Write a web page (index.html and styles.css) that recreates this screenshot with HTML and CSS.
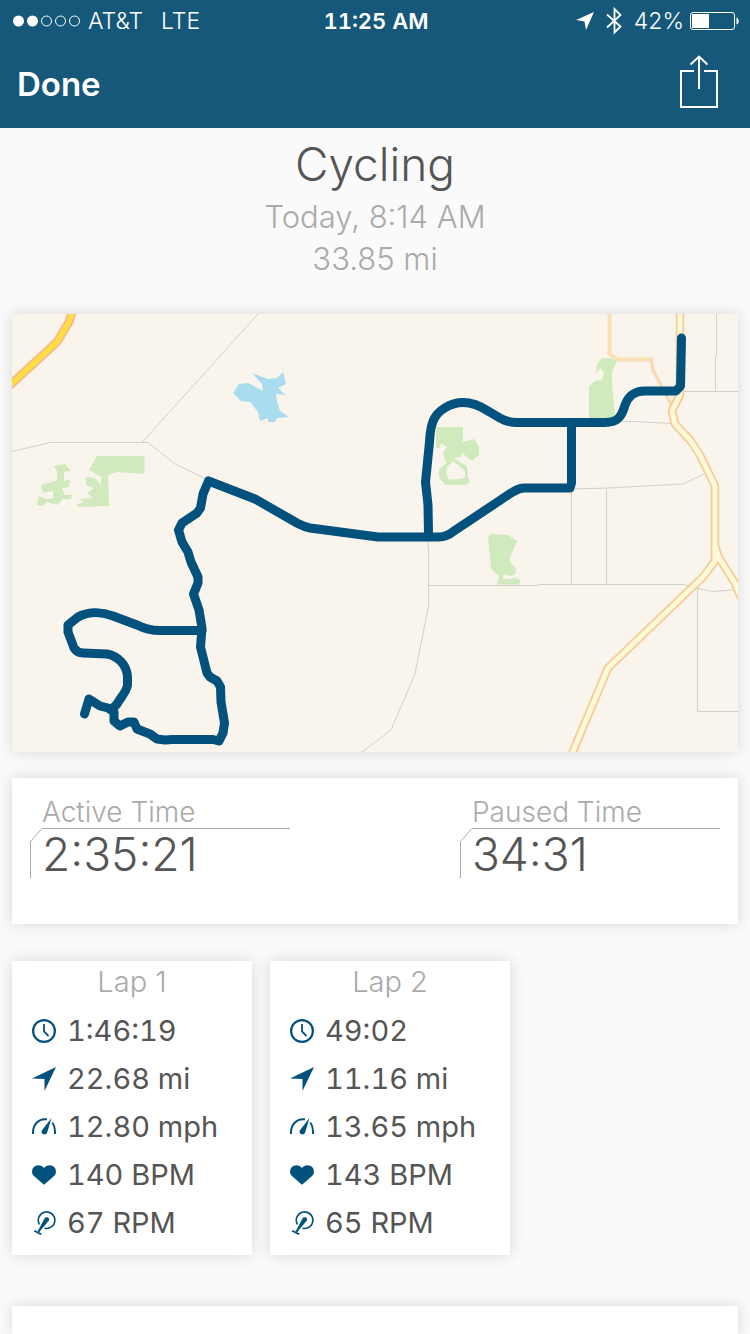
FILE: index.html
```html
<!DOCTYPE html>
<html lang="en">
  <head>
    <meta charset="UTF-8" />
    <meta name="viewport" content="width=device-width" />
    <title>Cycling</title>
    <link rel="stylesheet" href="styles.css">
  </head>
  <body>
    <!-- shared icons -->
    <svg class="sprite" aria-hidden="true">
      <symbol id="clock" viewBox="0 0 24 24">
        <circle cx="12" cy="12" r="10.900" fill="none" stroke="currentColor" stroke-width="2.200" />
        <path d="M12 5v7.500l4.500 4.500" fill="none" stroke="currentColor" stroke-width="1.800" />
      </symbol>
      <symbol id="arrow" viewBox="0 0 24 24">
        <path d="M24 0L12.500 24V12L0 11.500z" fill="currentColor" />
      </symbol>
      <symbol id="gauge" viewBox="0 0 24 24">
        <path d="M1 19C0.500 10 6.500 3 15 4.300M20.300 7.500C22.500 10.500 23.200 14.500 23 19" fill="none" stroke="currentColor" stroke-width="2" />
        <path d="M19.500 3L15.200 17.500C14.500 19.500 12 20 10.500 18.800C9 17.700 9.300 16 10.500 14.500z" fill="currentColor" />
      </symbol>
      <symbol id="heart" viewBox="0 0 24 24">
        <path d="M12 21.800L1.900 13C-1 10 -0.400 5 3.300 3C6.500 1.500 10 2.400 12 5C14 2.400 17.500 1.500 20.700 3C24.400 5 25 10 22.100 13z" fill="currentColor" />
      </symbol>
      <symbol id="cadence" viewBox="0 0 24 24">
        <path d="M7.500 13.500A8.300 8.300 0 1 1 12.500 17.200" fill="none" stroke="currentColor" stroke-width="1.600" />
        <path d="M17 7.500C16 5.500 13 6 12.500 7.500L7.200 17.500L5.400 20.500L7.400 21.300L9.300 18.600L16.500 10C17.200 9.200 17.300 8.300 17 7.500z" fill="currentColor" />
        <path d="M2.200 19.800L9.200 23.300" fill="none" stroke="currentColor" stroke-width="1.800" />
      </symbol>
      <symbol id="corner" viewBox="0 0 12 50">
        <path d="M0.500 50V13.500L12 0.500" fill="none" stroke="currentColor" />
      </symbol>
    </svg>

    <header class="topBar">
      <div class="statusBar">
        <div class="carrier">
          <svg width="68" height="12" viewBox="0 0 68 12" role="img" aria-label="Signal 2 of 5">
            <g fill="#fff">
              <circle cx="6.500" cy="6" r="5.500" />
              <circle cx="20.500" cy="6" r="5.500" />
            </g>
            <g fill="none" stroke="#fff">
              <circle cx="34.500" cy="6" r="5" />
              <circle cx="48.500" cy="6" r="5" />
              <circle cx="62.500" cy="6" r="5" />
            </g>
          </svg>
          <span class="carrierName">AT&amp;T</span>
          <span>LTE</span>
        </div>
        <strong class="time">11:25 AM</strong>
        <div class="indicators">
          <svg width="18" height="18" viewBox="0 0 18 18" role="img" aria-label="Location">
            <path d="M18 0L10 18L8.500 9.500L0 8z" fill="#fff" />
          </svg>
          <svg class="bluetooth" width="16" height="28" viewBox="0 0 16 28" role="img" aria-label="Bluetooth">
            <path d="M1 7.500L14.500 19.500L8.500 25.500V2L14.500 8L1 20.500" fill="none" stroke="#fff" stroke-width="1.800" />
          </svg>
          <span>42%</span>
          <svg width="50" height="20" viewBox="0 0 50 20" role="img" aria-label="Battery">
            <rect x="0.500" y="1.500" width="44" height="17" rx="2.500" fill="none" stroke="#fff" />
            <path d="M2 3h17v14H2z" fill="#fff" />
            <path d="M46.500 6.500c3 1 3 6 0 7z" fill="#fff" />
          </svg>
        </div>
      </div>
      <nav class="navBar">
        <button type="button" class="done">Done</button>
        <button type="button" class="share" aria-label="Share">
          <svg width="40" height="54" viewBox="0 0 40 54">
            <path d="M15 16H2V52H38V16H25M20 34V2M11.500 9.500L20 1.500L28.500 9.500" fill="none" stroke="#fff" stroke-width="2" />
          </svg>
        </button>
      </nav>
    </header>

    <main>
      <section class="summary">
        <h1>Cycling</h1>
        <p>Today, 8:14 AM</p>
        <p>33.85 mi</p>
      </section>

      <svg class="card map" viewBox="12 314 726 438" role="img" aria-label="Route map">
        <!-- parks -->
        <g fill="#d0eabd">
          <path d="M54 466L65 464L71 471L64 472L64 481L70 479L69 487L62 488L65 495L72 495L71 499L63 499L57 505L47 502L43 506L37 505L39 496L47 499L53 498L53 491L43 493L41 486L44 484L52 482L57 480L57 471z" />
          <path d="M97 456H144.500V474L117 472L108 475L109 506L77 507V504L84 502L79 499L93 498L87 493L94 488L86 485V477L95 478L101 485L101 477L89 470z" />
          <path fill-rule="evenodd" d="M436 427H463V442L474 439L479 447V455L472 461L462 453L461 457L453 458L467 466L468 477L470 482L465 485H445L439 477V470L446 463L443 453L447 447L441 443L440 448H436zM453 461L465 471V478L449 480L446 473L447 467z" />
          <path d="M602 358L618 359L612 372V385L615 415L605 420H589V386L595 381L602 380L604 372L600 368L596 374L597 365z" />
          <path d="M490 534L508 535L517 541L510 557V562L516 568L515 575L510 576L504 574L503 579L517 578L520 580V584.500H497L499 576L491 569L488 537z" />
        </g>
        <path fill="#a9dcef" d="M233 393L239 384L248 383L263 391L262 384L252 373L268 379L277 378L283 372L286 384L278 388L286 395L276 394L277 401L280 411L289 417L277 418L275 422H268V418L260 421L258 412L250 402L241 401z" />

        <!-- minor roads -->
        <path class="minor" d="M12 451.500L50 442.500H148L175 464L206 479M258 314L142 442.500M716.500 314V356L715.500 358V391M682 391.500H738M620 421.500H635L672 423.500M575 489L608 488L683 484L704 474M571.500 488V585M606.500 488V584M427.500 540L428.500 550V606L415 674L391 730L362 752M428.500 585.500H537L538 584.500H684L697 588L712 591.500L733 590M697.500 588V711.500H738" />

        <!-- highways: casing, then fill -->
        <path class="road" stroke="#fbe0b4" stroke-width="4" d="M609.500 312V354L618 359.500H651" />
        <path class="road" stroke="#fad9a8" stroke-width="3" d="M651 358L653 370L673 408" />
        <g class="road" stroke="#f9cb94" stroke-width="8.500">
          <path d="M680 312V395L672 411L675 424L690 440L700 455L715 486V546L719 558L735 583L741 598" />
          <path d="M715 546V561L703 577L608 668L571 756" />
        </g>
        <g class="road" stroke="#fdfad9" stroke-width="5">
          <path d="M680 312V395L672 411L675 424L690 440L700 455L715 486V546L719 558L735 583L741 598" />
          <path d="M715 546V561L703 577L608 668L571 756" />
        </g>
        <path class="road" stroke="#f8bd87" stroke-width="9" d="M73 310L69 322L57 342L8 387" />
        <path class="road" stroke="#ffe03f" stroke-width="5" d="M73 310L69 322L57 342L8 387" />

        <!-- recorded ride -->
        <g class="route">
          <path d="M681.500 338L680.500 386L676 391H645C633 391 628 397 625 405C622 416 618 422.500 605 422.500H517C504 422.500 497 416 488 411C479 405 472 402.500 463 402.500C450 402.500 438 411 434 419C430 427 430 435 429.500 442L425.500 482L428 505L428.500 533" />
          <path d="M571.500 423V483L570 488H524C518 488 515 491 511 493L454 531C449 535 445 537 439 537H378L310 528C304 527 301 525 297 523L255 499L208.500 481L203 494L200.500 508L197 513L182 523L178.500 530L182 542L188 552L191 562L198 577V583L193.500 594L199 610L202 628L200.500 647L207 673L210 677L217 681L220.500 687L221 702L224.500 723L223 733L219 741L213 739.500H172L165 740L157 739L150 734L137 729L134 722H128L120 726L114 721V712L108 708L100 706L89 699L84.500 714" />
          <path d="M202 630.500H162C150 631 143 628 137 625L113 616C100 611 87 612 78 617L68 625V632L74 648C76 651 79 653 83 653L107 654C118 656 127 665 127.500 677V685C127 691 121 697 117 704L112 709" />
        </g>
      </svg>

      <dl class="card times">
        <div class="timeBlock">
          <dt>Active Time</dt>
          <dd>
            <svg width="12" height="50" aria-hidden="true"><use href="#corner" /></svg>
            <span>2:35:21</span>
          </dd>
        </div>
        <div class="timeBlock">
          <dt>Paused Time</dt>
          <dd>
            <svg width="12" height="50" aria-hidden="true"><use href="#corner" /></svg>
            <span>34:31</span>
          </dd>
        </div>
      </dl>

      <div class="laps">
        <section class="card lap">
          <h2>Lap 1</h2>
          <ul>
            <li><svg class="icon"><use href="#clock" /></svg>1:46:19</li>
            <li><svg class="icon"><use href="#arrow" /></svg>22.68 mi</li>
            <li><svg class="icon"><use href="#gauge" /></svg>12.80 mph</li>
            <li><svg class="icon"><use href="#heart" /></svg>140 BPM</li>
            <li><svg class="icon"><use href="#cadence" /></svg>67 RPM</li>
          </ul>
        </section>
        <section class="card lap">
          <h2>Lap 2</h2>
          <ul>
            <li><svg class="icon"><use href="#clock" /></svg>49:02</li>
            <li><svg class="icon"><use href="#arrow" /></svg>11.16 mi</li>
            <li><svg class="icon"><use href="#gauge" /></svg>13.65 mph</li>
            <li><svg class="icon"><use href="#heart" /></svg>143 BPM</li>
            <li><svg class="icon"><use href="#cadence" /></svg>65 RPM</li>
          </ul>
        </section>
      </div>

      <section class="card next"></section>
    </main>
  </body>
</html>
```
FILE: styles.css
```css
* {
  box-sizing: border-box;
}

body {
  margin: 0;
  min-height: 100vh;
  display: flex;
  flex-direction: column;
  background: #fafafa;
  color: #555;
  font-family: Inter, "Liberation Sans", sans-serif;
}

h1,
h2,
p,
ul,
dl,
dd {
  margin: 0;
  padding: 0;
}

svg {
  display: block;
  flex-shrink: 0;
}

.sprite {
  display: none;
}

/* top bar */
.topBar {
  background: #165879;
  color: #fff;
}

.statusBar {
  display: grid;
  grid-template-columns: 1fr auto 1fr;
  align-items: center;
  height: 40px;
  padding: 2px 10px 0 12px;
  font-size: 23px;
}

.carrier,
.indicators {
  display: flex;
  align-items: center;
  font-weight: 300;
}

.carrier {
  gap: 8px;
}

.carrierName {
  margin-right: 10px;
}

.time {
  font-size: 22px;
  font-weight: 600;
  font-variant-numeric: tabular-nums;
}

.indicators {
  justify-content: flex-end;
  gap: 6px;
}

.bluetooth {
  margin: 0 6px;
}

.navBar {
  display: flex;
  justify-content: space-between;
  align-items: flex-start;
  height: 88px;
  padding: 15px 31px 0 17px;
}

.navBar button {
  padding: 0;
  border: 0;
  background: none;
  color: #fff;
  font: inherit;
}

.navBar .done {
  font-size: 33px;
  font-weight: 600;
  line-height: 58px;
}

/* content */
main {
  flex: 1;
  display: flex;
  flex-direction: column;
  padding: 0 12px;
}

.card {
  background: #fff;
  box-shadow: 0 0 14px rgba(0, 0, 0, 0.14);
}

.summary {
  padding: 8px 0 34px;
  text-align: center;
  color: #aaa;
  font-size: 31px;
  font-weight: 300;
  line-height: 42px;
}

.summary h1 {
  margin-bottom: 4px;
  color: #555;
  font-size: 46px;
  font-weight: 300;
  line-height: 56px;
}

.map {
  width: 100%;
  height: auto;
  background: #f9f4ec;
}

.minor {
  fill: none;
  stroke: #d3d0c8;
}

.road {
  fill: none;
  stroke-linejoin: round;
}

.route {
  fill: none;
  stroke: #03517d;
  stroke-width: 9;
  stroke-linecap: round;
  stroke-linejoin: round;
}

.times {
  display: flex;
  justify-content: space-between;
  margin-top: 26px;
  padding: 18px 18px 45px;
}

.timeBlock {
  width: 260px;
}

.timeBlock dt {
  padding-left: 12px;
  color: #aaa;
  font-size: 28px;
  font-weight: 300;
  line-height: 32px;
}

.timeBlock dd {
  display: flex;
  color: #aaa;
}

.timeBlock span {
  flex: 1;
  border-top: 1px solid #aaa;
  color: #555;
  font-size: 46px;
  font-weight: 300;
  line-height: 50px;
}

.laps {
  display: flex;
  flex-wrap: wrap;
  gap: 18px;
  margin-top: 37px;
}

.lap {
  width: 240px;
  padding-bottom: 8px;
}

.lap h2 {
  margin-bottom: 4px;
  color: #aaa;
  font-size: 29px;
  font-weight: 300;
  line-height: 42px;
  text-align: center;
}

.lap ul {
  padding: 0 20px;
  list-style: none;
}

.lap li {
  display: flex;
  align-items: center;
  gap: 11px;
  font-size: 29px;
  font-variant-numeric: tabular-nums;
  line-height: 48px;
}

.icon {
  width: 24px;
  height: 24px;
  color: #03517d;
}

.next {
  flex: 1;
  margin-top: 51px;
}
```
